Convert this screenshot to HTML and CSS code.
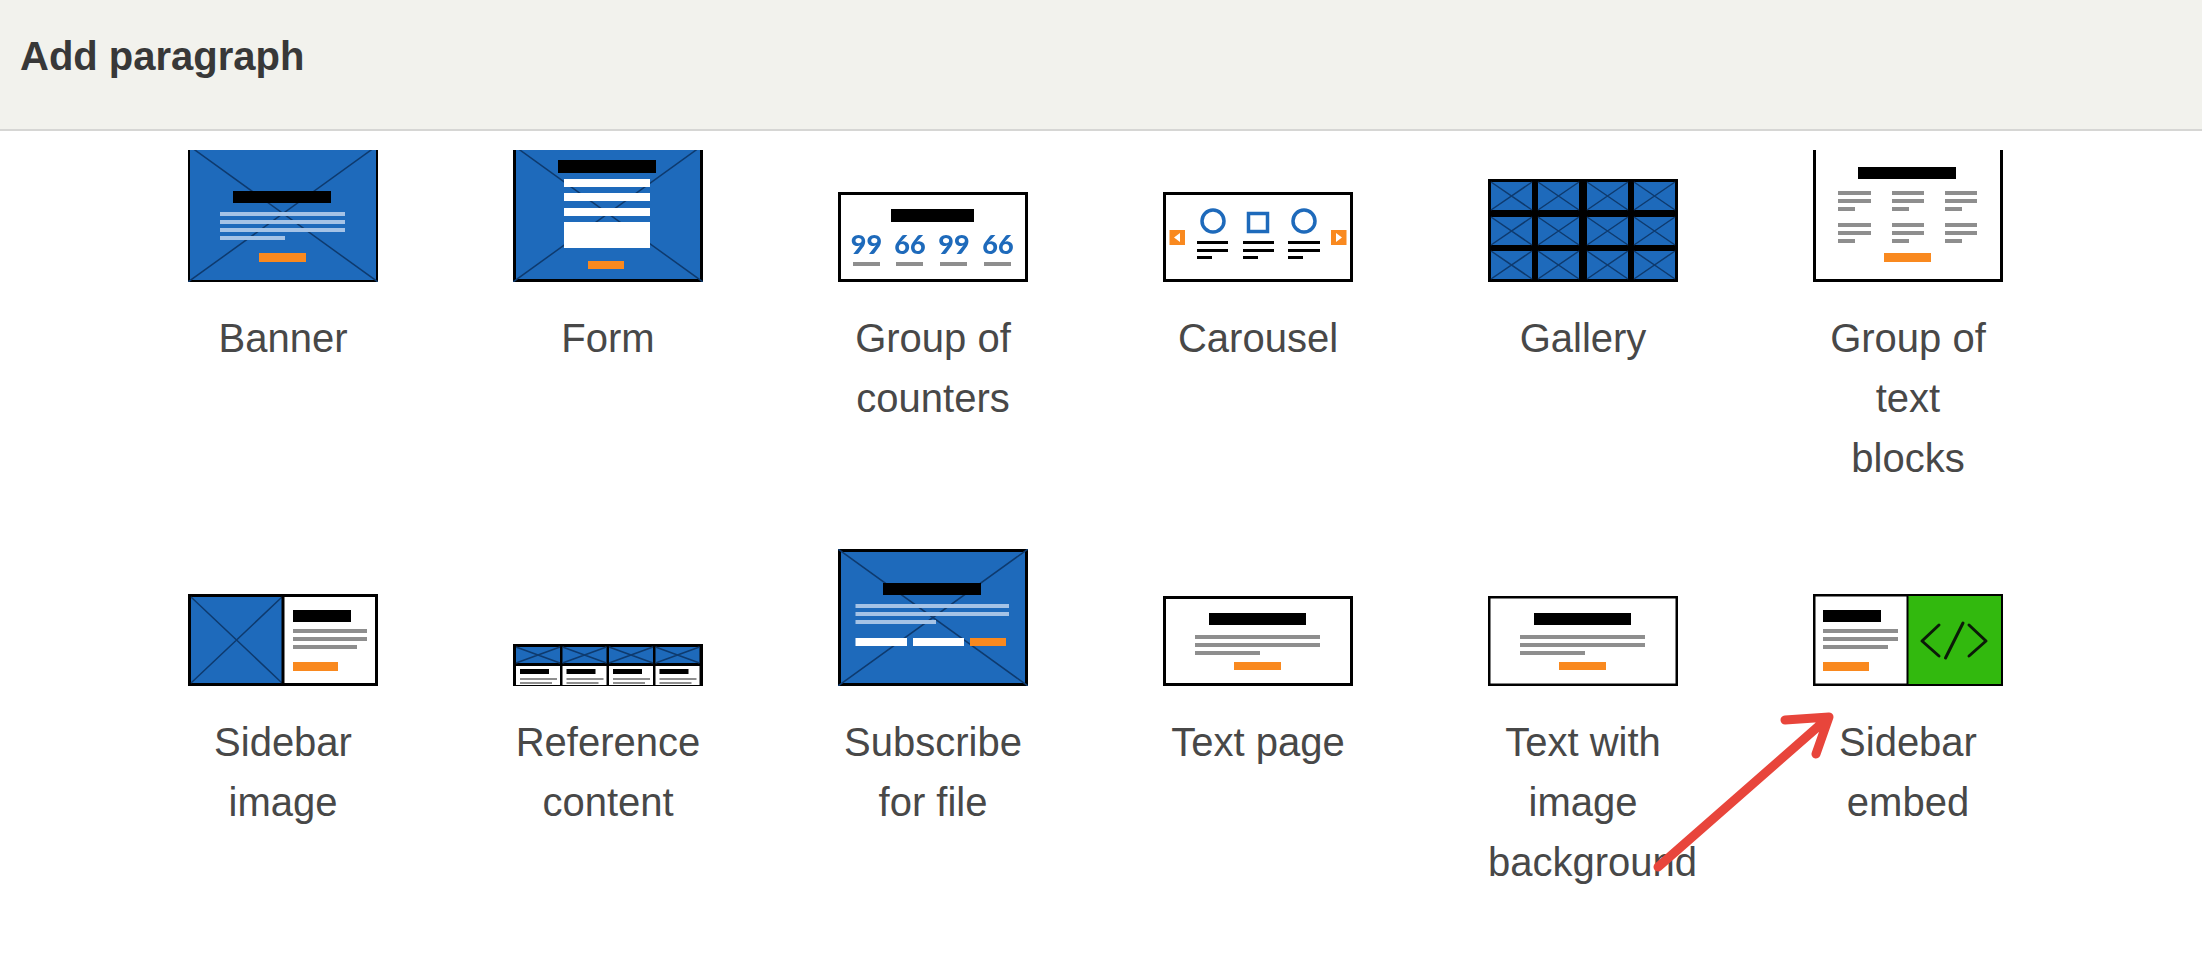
FILE: index.html
```html
<!DOCTYPE html>
<html lang="en">
<head>
<meta charset="utf-8">
<title>Add paragraph</title>
<link rel="stylesheet" href="styles.css">
</head>
<body>
<div class="page">
  <header class="header"><h1 class="title">Add paragraph</h1></header>
  <main class="scroller">
    <div class="grid">

      <div class="item">
        <div class="slot">
          <svg class="icon" width="190" height="137" viewBox="0 -5 190 137">
            <rect class="bl bo fine" x="1" y="-4" width="188" height="135"/>
            <path class="xl" d="M0-5 190 132M190-5 0 132"/>
            <path class="lt" d="M32 62h125v4H32zM32 70h125v4H32zM32 78h125v4H32zM32 86h65v4H32z"/>
            <rect class="bk" x="45" y="41" width="98" height="12"/>
            <rect class="or" x="71" y="103" width="47" height="9"/>
          </svg>
        </div>
        <div class="label">Banner</div>
      </div>

      <div class="item">
        <div class="slot">
          <svg class="icon" width="190" height="137" viewBox="0 -5 190 137">
            <rect class="bl bo" x="1.5" y="-3.5" width="187" height="134"/>
            <path class="xl" d="M0-5 190 132M190-5 0 132"/>
            <rect class="bk" x="45" y="10" width="98" height="13"/>
            <path class="wh" d="M51 29h86v8H51zM51 43h86v8H51zM51 58h86v8H51zM51 72h86v26H51z"/>
            <rect class="or" x="75" y="111" width="36" height="8"/>
          </svg>
        </div>
        <div class="label">Form</div>
      </div>

      <div class="item">
        <div class="slot">
          <svg class="icon" width="190" height="90" viewBox="0 0 190 90">
            <rect class="wh bo" x="1.5" y="1.5" width="187" height="87"/>
            <rect class="bk" x="53" y="17" width="83" height="13"/>
            <text class="num" x="28.5" y="62">99</text>
            <text class="num" x="72" y="62">66</text>
            <text class="num" x="116" y="62">99</text>
            <text class="num" x="160" y="62">66</text>
            <path class="gr" d="M15 70h27v4H15zM58 70h27v4H58zM102 70h27v4h-27zM146 70h27v4h-27z"/>
          </svg>
        </div>
        <div class="label">Group of counters</div>
      </div>

      <div class="item">
        <div class="slot">
          <svg class="icon" width="190" height="90" viewBox="0 0 190 90">
            <rect class="wh bo" x="1.5" y="1.5" width="187" height="87"/>
            <circle class="ring" cx="50" cy="29" r="11"/>
            <rect class="ring" x="85.5" y="21.5" width="19" height="18"/>
            <circle class="ring" cx="141" cy="29" r="11"/>
            <rect class="or" x="6.500" y="38" width="15.500" height="15"/>
            <path class="wh" d="M11 45.500 17 41v9z"/>
            <rect class="or" x="168" y="38" width="15.500" height="15"/>
            <path class="wh" d="M179 45.500 173 41v9z"/>
            <path class="bk" d="M34 49h31v3H34zM34 57h31v3H34zM34 64h15v3H34zM80 49h31v3H80zM80 57h31v3H80zM80 64h15v3H80zM125 49h32v3h-32zM125 57h32v3h-32zM125 64h15v3h-15z"/>
          </svg>
        </div>
        <div class="label">Carousel</div>
      </div>

      <div class="item">
        <div class="slot">
          <svg class="icon" width="190" height="103" viewBox="0 0 190 103">
            <defs>
              <g id="cell">
                <rect class="bl" width="41" height="28"/>
                <path class="xl" d="M0 0 41 28M41 0 0 28"/>
              </g>
            </defs>
            <rect class="bk" width="190" height="103"/>
            <use href="#cell" x="3" y="3"/><use href="#cell" x="50" y="3"/><use href="#cell" x="99" y="3"/><use href="#cell" x="146" y="3"/>
            <use href="#cell" x="3" y="38"/><use href="#cell" x="50" y="38"/><use href="#cell" x="99" y="38"/><use href="#cell" x="146" y="38"/>
            <use href="#cell" x="3" y="72"/><use href="#cell" x="50" y="72"/><use href="#cell" x="99" y="72"/><use href="#cell" x="146" y="72"/>
          </svg>
        </div>
        <div class="label">Gallery</div>
      </div>

      <div class="item">
        <div class="slot">
          <svg class="icon" width="190" height="137" viewBox="0 -5 190 137">
            <rect class="wh bo" x="1.5" y="-3.500" width="187" height="134"/>
            <rect class="bk" x="45" y="17" width="98" height="12"/>
            <path class="gr" d="M25 41h33v4H25zM25 49h33v4H25zM25 57h17v4H25zM79 41h32v4H79zM79 49h32v4H79zM79 57h17v4H79zM132 41h32v4h-32zM132 49h32v4h-32zM132 57h17v4h-17zM25 73h33v4H25zM25 81h33v4H25zM25 89h17v4H25zM79 73h32v4H79zM79 81h32v4H79zM79 89h17v4H79zM132 73h32v4h-32zM132 81h32v4h-32zM132 89h17v4h-17z"/>
            <rect class="or" x="71" y="103" width="47" height="9"/>
          </svg>
        </div>
        <div class="label">Group of text<br>blocks</div>
      </div>

      <div class="item">
        <div class="slot">
          <svg class="icon" width="190" height="92" viewBox="0 0 190 92">
            <rect class="wh bo" x="1.5" y="1.5" width="187" height="89"/>
            <rect class="bl" x="3" y="3" width="91" height="86"/>
            <path class="xl" d="M3 3 94 89M94 3 3 89"/>
            <rect class="bk" x="93.500" y="0" width="3" height="92"/>
            <rect class="bk" x="105" y="16" width="58" height="12"/>
            <path class="gr" d="M105 35h74v4h-74zM105 43h74v4h-74zM105 51h64v4h-64z"/>
            <rect class="or" x="105" y="68" width="45" height="9"/>
          </svg>
        </div>
        <div class="label">Sidebar image</div>
      </div>

      <div class="item">
        <div class="slot">
          <svg class="icon" width="190" height="42" viewBox="0 0 190 42">
            <defs>
              <g id="ref">
                <rect class="bl" width="44" height="16"/>
                <path class="xl" d="M0 0 44 16M44 0 0 16"/>
                <rect class="wh" y="19" width="44" height="19"/>
                <rect class="bk" x="4" y="22" width="29" height="5"/>
                <path class="gr" d="M4 31h37v2H4zM4 35h32v2H4z"/>
              </g>
            </defs>
            <rect class="bk" width="190" height="42"/>
            <use href="#ref" x="3" y="3"/><use href="#ref" x="49.500" y="3"/><use href="#ref" x="96" y="3"/><use href="#ref" x="142.500" y="3"/>
          </svg>
        </div>
        <div class="label">Reference content</div>
      </div>

      <div class="item">
        <div class="slot">
          <svg class="icon" width="190" height="137" viewBox="0 0 190 137">
            <rect class="bl bo" x="1.5" y="1.5" width="187" height="134"/>
            <path class="xl" d="M0 0 190 137M190 0 0 137"/>
            <path class="lt" d="M17.500 55H171v4H17.500zM17.500 63H171v4H17.500zM17.500 71H98v4H17.500z"/>
            <rect class="bk" x="45" y="34" width="98" height="12"/>
            <path class="wh" d="M17.500 89H69v8H17.500zM75 89h51v8H75z"/>
            <rect class="or" x="132" y="89" width="36" height="8"/>
          </svg>
        </div>
        <div class="label">Subscribe for file</div>
      </div>

      <div class="item">
        <div class="slot">
          <svg class="icon" width="190" height="90" viewBox="0 0 190 90">
            <rect class="wh bo" x="1.5" y="1.500" width="187" height="87"/>
            <rect class="bk" x="46" y="17" width="97" height="12"/>
            <path class="gr" d="M32 39h125v4H32zM32 47h125v4H32zM32 55h65v4H32z"/>
            <rect class="or" x="71" y="66" width="47" height="8"/>
          </svg>
        </div>
        <div class="label">Text page</div>
      </div>

      <div class="item">
        <div class="slot">
          <svg class="icon" width="190" height="90" viewBox="0 0 190 90">
            <rect class="wh bo thin" x="1.25" y="1.25" width="187.500" height="87.500"/>
            <rect class="bk" x="46" y="17" width="97" height="12"/>
            <path class="gr" d="M32 39h125v4H32zM32 47h125v4H32zM32 55h65v4H32z"/>
            <rect class="or" x="71" y="66" width="47" height="8"/>
          </svg>
        </div>
        <div class="label">Text with image background</div>
      </div>

      <div class="item">
        <div class="slot">
          <svg class="icon" width="190" height="92" viewBox="0 0 190 92">
            <rect class="wh bo thin" x="1.25" y="1.25" width="187.500" height="89.500"/>
            <rect class="green" x="95" y="2" width="93" height="88"/>
            <rect class="bk" x="93.500" y="0" width="2" height="92"/>
            <rect class="bk" x="10" y="16" width="58" height="12"/>
            <path class="gr" d="M10 35h75v4H10zM10 43h75v4H10zM10 51h65v4H10z"/>
            <rect class="or" x="10" y="68" width="46" height="9"/>
            <path class="code" d="M126 31 109 47 126 62M150 29 132.500 64M156 31 173 47 156 62"/>
          </svg>
        </div>
        <div class="label">Sidebar embed</div>
      </div>

    </div>
  </main>
  <svg class="arrow" width="2202" height="957" viewBox="0 0 2202 957">
    <path d="M1658 867 1829 717M1785 720 1829 717 1816 754"/>
  </svg>
</div>
</body>
</html>
```

FILE: styles.css
```css
* {
  box-sizing: border-box;
}

html,
body {
  margin: 0;
  height: 100%;
  background: #fff;
}

body {
  font-family: "Liberation Sans", Arial, sans-serif;
  color: #484848;
  overflow: hidden;
}

.page {
  position: relative;
  display: flex;
  flex-direction: column;
  height: 957px;
}

.header {
  flex: none;
  display: flex;
  align-items: center;
  height: 131px;
  padding: 0 0 17px 20px;
  background: #f2f2ed;
  border-bottom: 2px solid #d6d6d4;
}

.title {
  margin: 0;
  font-size: 40px;
  line-height: 48px;
  font-weight: 700;
  color: #383838;
}

.scroller {
  flex: 1;
  margin-top: 19px;
  overflow: hidden;
}

.grid {
  display: grid;
  grid-template-columns: repeat(6, 190px);
  column-gap: 135px;
  row-gap: 61px;
  margin-top: -5px;
  padding-left: 188px;
}

.item {
  display: flex;
  flex-direction: column;
}

.slot {
  display: flex;
  align-items: flex-end;
  height: 137px;
  margin-bottom: 26px;
}

.icon {
  display: block;
  filter: blur(0.4px);
}

.label {
  font-size: 40px;
  line-height: 60px;
  text-align: center;
}

.bl { fill: #1e6abb; }
.bk { fill: #000; }
.wh { fill: #fff; }
.or { fill: #f9891f; }
.gr { fill: #8e8e8e; }
.lt { fill: #a5c3e6; }
.green { fill: #32b90e; }

.bo {
  stroke: #000;
  stroke-width: 3;
}

.bo.thin {
  stroke-width: 2.5;
}

.bo.fine {
  stroke-width: 2;
}

.xl {
  fill: none;
  stroke: #0e3a6e;
  stroke-width: 1.5;
}

.ring {
  fill: none;
  stroke: #1e6abb;
  stroke-width: 3.5;
}

.num {
  font-family: Lato, sans-serif;
  font-size: 27px;
  font-weight: 900;
  fill: #1e6abb;
  text-anchor: middle;
}

.code {
  fill: none;
  stroke: #0b1a08;
  stroke-width: 3;
  stroke-linecap: round;
  stroke-linejoin: round;
}

.arrow {
  position: absolute;
  top: 0;
  left: 0;
  pointer-events: none;
}

.arrow path {
  fill: none;
  stroke: #e8453b;
  stroke-width: 9;
  stroke-linecap: round;
  stroke-linejoin: round;
}
```
